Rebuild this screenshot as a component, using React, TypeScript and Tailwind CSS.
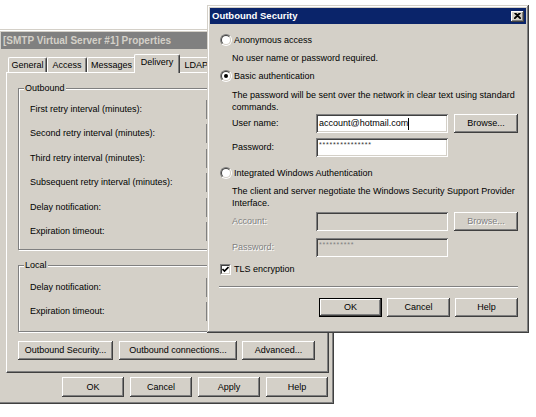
import React from "react";

const RAISED =
  "shadow-[inset_-1px_-1px_0_#404040,inset_1px_1px_0_#ffffff,inset_-2px_-2px_0_#808080,inset_2px_2px_0_#d4d0c8]";
const RAISED_DEF =
  "border border-black shadow-[inset_-1px_-1px_0_#404040,inset_1px_1px_0_#ffffff,inset_-2px_-2px_0_#808080]";
const SUNKEN =
  "shadow-[inset_1px_1px_0_#808080,inset_-1px_-1px_0_#ffffff,inset_2px_2px_0_#404040,inset_-2px_-2px_0_#d4d0c8]";
const FRAME =
  "shadow-[inset_-1px_-1px_0_#404040,inset_1px_1px_0_#d4d0c8,inset_-2px_-2px_0_#808080,inset_2px_2px_0_#ffffff]";

function Btn({
  className,
  children,
  def,
  disabled,
}: {
  className: string;
  children: React.ReactNode;
  def?: boolean;
  disabled?: boolean;
}) {
  return (
    <div
      className={`${def ? RAISED_DEF : RAISED} ${className} flex items-center justify-center bg-[#d4d0c8] ${
        disabled ? "text-[#808080] [text-shadow:1px_1px_0_#ffffff]" : "text-black"
      }`}
    >
      {children}
    </div>
  );
}

function Field({
  className,
  children,
  disabled,
}: {
  className: string;
  children?: React.ReactNode;
  disabled?: boolean;
}) {
  return (
    <div
      className={`${SUNKEN} ${className} ${disabled ? "bg-[#d4d0c8]" : "bg-white"} flex items-center pl-[3px]`}
    >
      {children}
    </div>
  );
}

function Radio({ checked }: { checked?: boolean }) {
  return (
    <div className="w-[12px] h-[12px] rounded-full border border-t-[#808080] border-l-[#808080] border-r-white border-b-white shrink-0">
      <div className="w-full h-full rounded-full border border-t-[#404040] border-l-[#404040] border-r-[#d4d0c8] border-b-[#d4d0c8] bg-white flex items-center justify-center">
        {checked && <div className="w-[4px] h-[4px] rounded-full bg-black" />}
      </div>
    </div>
  );
}

function Check() {
  return (
    <div className="w-[11px] h-[11px] border border-t-[#808080] border-l-[#808080] border-r-white border-b-white shrink-0">
      <div className="w-full h-full border border-t-[#404040] border-l-[#404040] border-r-[#d4d0c8] border-b-[#d4d0c8] bg-white flex items-center justify-center">
        <svg width="7" height="7" viewBox="0 0 7 7">
          <path d="M0.5 3 L2.5 5 L6.5 1" fill="none" stroke="#000" strokeWidth="1.6" />
        </svg>
      </div>
    </div>
  );
}

function Group({
  label,
  className,
  children,
}: {
  label: string;
  className: string;
  children: React.ReactNode;
}) {
  return (
    <div
      className={`relative border border-[#808080] shadow-[inset_1px_1px_0_#ffffff,1px_1px_0_#ffffff] ${className}`}
    >
      <div className="absolute left-[5px] top-[-6px] bg-[#d4d0c8] px-[1px] leading-[11px]">{label}</div>
      {children}
    </div>
  );
}

function LabelRow({ label }: { label: string }) {
  return (
    <div className="h-[24.5px] flex items-center pl-[11px]">
      <div className="w-[176px]">{label}</div>
      <Field className="w-[60px] h-[19px]" />
    </div>
  );
}

function Tab({ label, className, selected }: { label: string; className: string; selected?: boolean }) {
  return (
    <div
      className={`${className} ${
        selected ? "h-[19px] mb-[-1px] relative z-10 pb-[3px]" : "h-[15px]"
      } flex items-center justify-center bg-[#d4d0c8] border-t border-l border-white border-r border-r-[#404040] rounded-t-[2px] shadow-[inset_-1px_0_0_#808080]`}
    >
      {label}
    </div>
  );
}

function BgWindow() {
  return (
    <div className={`absolute left-[-2px] top-[29px] w-[336px] h-[375px] bg-[#d4d0c8] ${FRAME} p-[3px] flex flex-col`}>
      <div className="h-[17px] bg-[#808080] flex items-center pl-[2px] text-[10px] font-bold text-[#d4d0c8] whitespace-nowrap">
        [SMTP Virtual Server #1] Properties
      </div>
      <div className="mt-[5px] ml-[5px] h-[18px] flex items-end">
        <Tab label="General" className="w-[39px] ml-[2px]" />
        <Tab label="Access" className="w-[40px]" />
        <Tab label="Messages" className="w-[49px]" />
        <Tab label="Delivery" selected className="w-[46px] -mx-[2px]" />
        <Tab label="LDAP Routing" className="w-[70px]" />
      </div>
      <div className="ml-[5px] w-[323px] h-[301px] border-t border-l border-white border-b border-r border-b-[#404040] border-r-[#404040] shadow-[inset_-1px_-1px_0_#808080] pt-[15px] pl-[11px] flex flex-col">
        <Group label="Outbound" className="w-[300px] h-[162px] pt-[8px]">
          <LabelRow label="First retry interval (minutes):" />
          <LabelRow label="Second retry interval (minutes):" />
          <LabelRow label="Third retry interval (minutes):" />
          <LabelRow label="Subsequent retry interval (minutes):" />
          <LabelRow label="Delay notification:" />
          <LabelRow label="Expiration timeout:" />
        </Group>
        <Group label="Local" className="mt-[15px] w-[300px] h-[67px] pt-[9px]">
          <LabelRow label="Delay notification:" />
          <LabelRow label="Expiration timeout:" />
        </Group>
        <div className="mt-[9px] flex gap-[6px]">
          <Btn className="w-[95px] h-[19px]">Outbound Security...</Btn>
          <Btn className="w-[118px] h-[19px]">Outbound connections...</Btn>
          <Btn className="w-[73px] h-[19px] ml-[-1px]">Advanced...</Btn>
        </div>
      </div>
      <div className="mt-[4px] pr-[3px] flex justify-end gap-[6px]">
        <Btn className="w-[62px] h-[20px]">OK</Btn>
        <Btn className="w-[62px] h-[20px]">Cancel</Btn>
        <Btn className="w-[62px] h-[20px]">Apply</Btn>
        <Btn className="w-[62px] h-[20px]">Help</Btn>
      </div>
    </div>
  );
}

function FrontWindow() {
  const dis = "text-[#808080] [text-shadow:1px_1px_0_#ffffff]";
  return (
    <div className={`absolute left-[207px] top-[5px] w-[322px] h-[328px] bg-[#d4d0c8] ${FRAME} p-[3px] flex flex-col`}>
      <div className="h-[16px] bg-[#0a246a] flex items-center justify-between pl-[2px] pr-[2px]">
        <span className="text-white font-bold text-[9.5px]">Outbound Security</span>
        <div className={`${RAISED} w-[13px] h-[11px] bg-[#d4d0c8] flex items-center justify-center`}>
          <svg width="7" height="6" viewBox="0 0 7 6">
            <path d="M0.5 0 L6.5 6 M6.5 0 L0.5 6 M1.5 0 L7 5.5 M5.5 0 L0 5.5" stroke="#000" strokeWidth="1.1" fill="none" />
          </svg>
        </div>
      </div>
      <div className="pl-[10px] pr-[8px] flex flex-col">
        <div className="mt-[9px] h-[14px] flex items-center gap-[2px]">
          <Radio />
          <span>Anonymous access</span>
        </div>
        <div className="mt-[4px] h-[14px] flex items-center pl-[12px]">No user name or password required.</div>
        <div className="mt-[4px] h-[14px] flex items-center gap-[2px]">
          <Radio checked />
          <span>Basic authentication</span>
        </div>
        <div className="mt-[6px] pl-[12px] leading-[12px] whitespace-nowrap">
          The password will be sent over the network in clear text using standard
          <br />
          commands.
        </div>
        <div className="mt-[1px] pl-[12px] flex items-center">
          <div className="w-[84px]">User name:</div>
          <Field className="w-[132px] h-[19px]">
            <span>account@hotmail.com</span>
            <span className="w-[1px] h-[12px] bg-black" />
          </Field>
          <Btn className="ml-[6px] w-[64px] h-[19px]">Browse...</Btn>
        </div>
        <div className="mt-[5px] pl-[12px] flex items-center">
          <div className="w-[84px]">Password:</div>
          <Field className="w-[132px] h-[19px] !items-start pt-[3px]">
            <span className="text-[7px] leading-[7px] tracking-[0.8px] text-[#333]">***************</span>
          </Field>
        </div>
        <div className="mt-[9px] h-[14px] flex items-center gap-[2px]">
          <Radio />
          <span>Integrated Windows Authentication</span>
        </div>
        <div className="mt-[5px] pl-[12px] leading-[12px] whitespace-nowrap">
          The client and server negotiate the Windows Security Support Provider
          <br />
          Interface.
        </div>
        <div className="mt-[3px] pl-[12px] flex items-center">
          <div className={`w-[84px] ${dis}`}>Account:</div>
          <Field disabled className="w-[132px] h-[19px]" />
          <Btn disabled className="ml-[6px] w-[64px] h-[19px]">Browse...</Btn>
        </div>
        <div className="mt-[7px] pl-[12px] flex items-center">
          <div className={`w-[84px] ${dis}`}>Password:</div>
          <Field disabled className="w-[132px] h-[19px] !items-start pt-[3px]">
            <span className="text-[7px] leading-[7px] tracking-[0.8px] text-[#808080]">**********</span>
          </Field>
        </div>
        <div className="mt-[5px] h-[14px] flex items-center gap-[3px]">
          <Check />
          <span>TLS encryption</span>
        </div>
        <div className="mt-[10px] ml-[-1px] h-[2px] border-t border-t-[#808080] border-b border-b-white" />
        <div className="mt-[10px] flex justify-end gap-[5px]">
          <Btn def className="w-[63px] h-[19px]">OK</Btn>
          <Btn className="w-[63px] h-[19px]">Cancel</Btn>
          <Btn className="w-[63px] h-[19px]">Help</Btn>
        </div>
      </div>
    </div>
  );
}

export default function App() {
  return (
    <div className="relative w-[536px] h-[417px] overflow-hidden bg-white font-['Liberation_Sans',Arial,sans-serif] text-[9px] leading-none text-black">
      <BgWindow />
      <FrontWindow />
    </div>
  );
}
